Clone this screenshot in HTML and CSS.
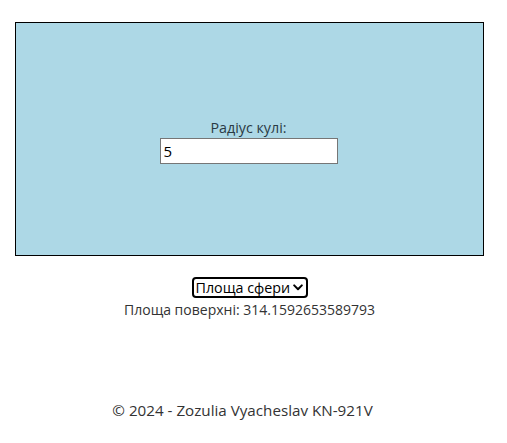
FILE: index.html
```html
<!DOCTYPE html>
<html lang="uk">
<head>
<meta charset="utf-8">
<title>Площа сфери</title>
<link rel="stylesheet" href="styles.css">
</head>
<body>
<div class="page">
  <main class="main">
    <section class="panel">
      <label class="field">
        <span class="field-label">Радіус кулі:</span>
        <input class="field-input" type="text" value="5">
      </label>
    </section>
    <div class="controls">
      <span class="select-wrap">
        <select class="select">
          <option>Площа сфери</option>
          <option>Об'єм кулі</option>
        </select>
        <svg class="chevron" width="10" height="7" viewBox="0 0 10 7" aria-hidden="true"><path d="M1.2 1.4 L5 5.2 L8.8 1.4" fill="none" stroke="#000" stroke-width="2" stroke-linecap="round" stroke-linejoin="round"/></svg>
      </span>
      <p class="result">Площа поверхні: 314.1592653589793</p>
    </div>
  </main>
  <footer class="footer">© 2024 - Zozulia Vyacheslav KN-921V</footer>
</div>
</body>
</html>
```

FILE: styles.css
```css
* { box-sizing: border-box; }
html, body { margin: 0; padding: 0; background: #fff; }
body {
  font-family: "Open Sans", "Noto Sans", "Liberation Sans", sans-serif;
  font-size: 14px;
  color: #333;
}
.page {
  width: 499px;
  padding-top: 22px;
}
.main {
  display: flex;
  flex-direction: column;
  align-items: center;
}
.panel {
  margin-left: 15px;
  align-self: flex-start;
  width: 469px;
  height: 234px;
  background: #add8e6;
  border: 1px solid #000;
  display: flex;
  align-items: center;
  justify-content: center;
  padding-right: 2px;
}
.field {
  display: flex;
  flex-direction: column;
  align-items: center;
  margin-top: 4px;
}
.field-label {
  font-size: 14.3px;
  line-height: 20px;
  color: #2a3a44;
}
.field-input {
  width: 178px;
  height: 26px;
  border: 1px solid #767676;
  background: #fff;
  font-family: inherit;
  font-size: 15px;
  color: #000;
  padding: 0 3px;
  margin: 0;
}
.controls {
  display: flex;
  flex-direction: column;
  align-items: center;
  margin-top: 21px;
}
.select-wrap {
  display: inline-flex;
  align-items: center;
  height: 21px;
  border: 2px solid #000;
  border-radius: 4px;
  padding: 0 3px 0 2px;
  gap: 2px;
}
.select {
  appearance: none;
  -webkit-appearance: none;
  border: 0;
  background: transparent;
  font-family: inherit;
  font-size: 14.3px;
  color: #000;
  padding: 0;
  margin: 0;
  line-height: 17px;
  outline: none;
}
.chevron { display: block; }
.result {
  margin: 1px 0 0;
  line-height: 22px;
}
.footer {
  margin-top: 78px;
  text-align: center;
  width: 485px;
  font-size: 15.2px;
  line-height: 22px;
}
```
